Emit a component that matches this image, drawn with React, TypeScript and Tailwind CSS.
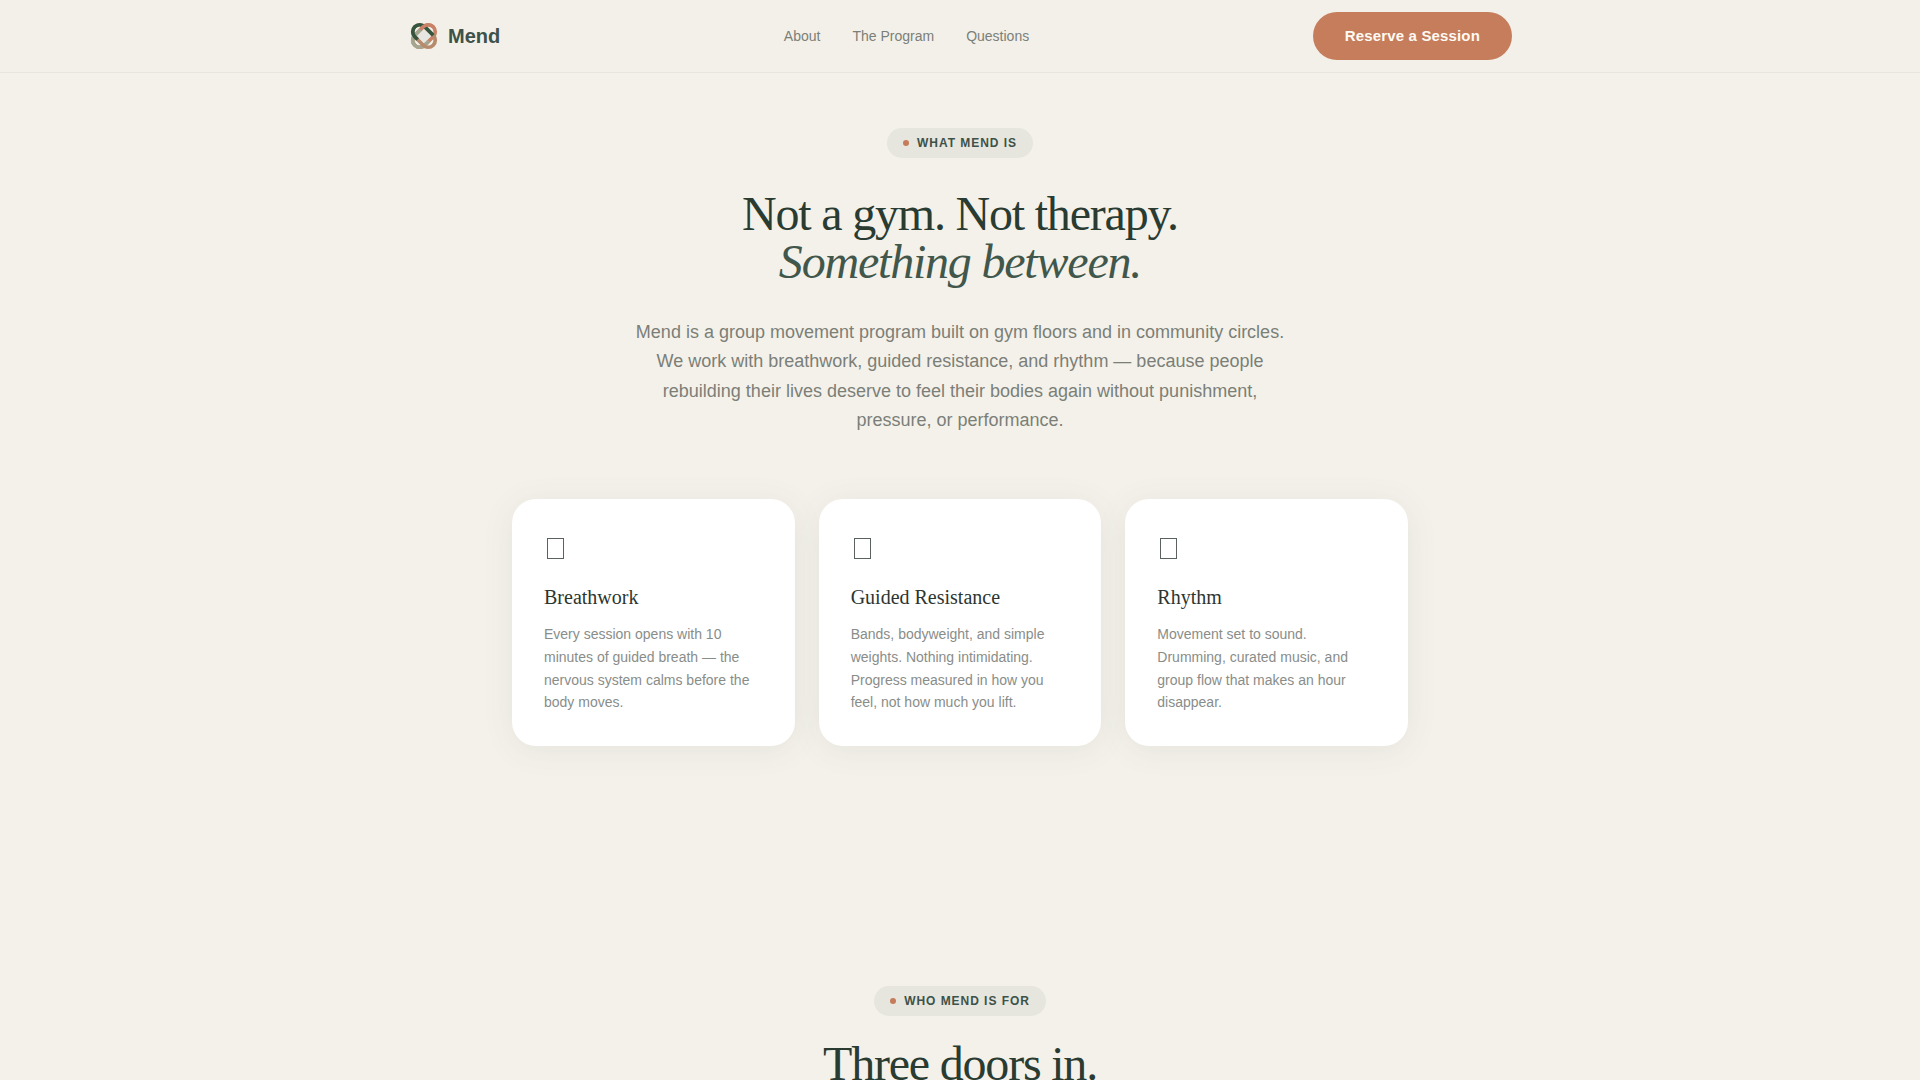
const navLinks = [
  { label: 'About', href: '#about' },
  { label: 'The Program', href: '#program' },
  { label: 'Questions', href: '#questions' },
];

const pillars = [
  {
    title: 'Breathwork',
    text: 'Every session opens with 10 minutes of guided breath — the nervous system calms before the body moves.',
  },
  {
    title: 'Guided Resistance',
    text: 'Bands, bodyweight, and simple weights. Nothing intimidating. Progress measured in how you feel, not how much you lift.',
  },
  {
    title: 'Rhythm',
    text: 'Movement set to sound. Drumming, curated music, and group flow that makes an hour disappear.',
  },
];

function Logo() {
  return (
    <svg className="size-8" viewBox="0 0 32 32" fill="none" strokeWidth="3.7" aria-hidden="true">
      <rect x="11" y="11" width="10" height="10" fill="#e6e7e3" transform="rotate(45 16 16)" />
      <g transform="rotate(-45 16 16)">
        <rect x="3" y="9" width="26" height="14" rx="7" stroke="#c98266" />
        <path d="M18 9 H10 A7 7 0 0 0 10 23 H16" stroke="#a3a691" />
      </g>
      <g transform="rotate(45 16 16)">
        <rect x="3" y="9" width="26" height="14" rx="7" stroke="#b88a6c" />
        <path d="M22 9 H10 A7 7 0 0 0 10 23 H14" stroke="#34553f" />
      </g>
      <path d="M18 9 H22 A7 7 0 0 1 29 16" stroke="#c98266" transform="rotate(-45 16 16)" />
    </svg>
  );
}

function Pill({ children }: { children: string }) {
  return (
    <span className="inline-flex h-[30px] items-center gap-2 rounded-full bg-[#e6e5de] px-4 text-xs font-semibold uppercase tracking-[0.08em] text-[#3d5248]">
      <span className="size-1.5 rounded-full bg-[#c67b5a]" />
      {children}
    </span>
  );
}

export default function App() {
  return (
    <div className="min-h-screen bg-[#f4f1ea] font-['Liberation_Sans',Arial,sans-serif] text-[#2d3531]">
      <header className="border-b border-[#e7e5de] bg-[#f3f0e9]">
        <div className="mx-auto flex max-w-6xl items-center justify-between px-6 py-3">
          <a href="#top" className="flex items-center gap-2 text-xl font-bold text-[#3d5248]">
            <Logo />
            Mend
          </a>
          <nav aria-label="Main" className="flex gap-8 text-sm text-[#7b7f78]">
            {navLinks.map((link) => (
              <a key={link.href} href={link.href}>
                {link.label}
              </a>
            ))}
          </nav>
          <button
            type="button"
            className="h-12 rounded-full bg-[#c67d5c] px-8 text-[15px] font-semibold tracking-[0.01em] text-[#fdf9f3]"
          >
            Reserve a Session
          </button>
        </div>
      </header>
      <main>
        <section id="about" className="px-6 pt-[55px] pb-28">
          <div className="mx-auto flex max-w-4xl flex-col items-center text-center">
            <Pill>What Mend is</Pill>
            <h1 className="mt-8 font-['Liberation_Serif',serif] text-5xl leading-none tracking-tight text-[#2a3b32]">
              Not a gym. Not therapy.
              <br />
              <em className="text-[#42574b]">Something between.</em>
            </h1>
            <p className="mt-8 max-w-2xl text-lg leading-relaxed text-[#7b7f78]">
              Mend is a group movement program built on gym floors and in community circles. We work with
              breathwork, guided resistance, and rhythm — because people rebuilding their lives deserve to feel
              their bodies again without punishment, pressure, or performance.
            </p>
          </div>
          <div className="mx-auto mt-16 grid max-w-4xl grid-cols-3 gap-6">
            {pillars.map((pillar) => (
              <article
                key={pillar.title}
                className="rounded-3xl bg-white p-8 shadow-[0_4px_32px_rgba(45,90,80,0.08)]"
              >
                <div className="mb-4 flex h-9 items-start pt-[7px] pl-[3px]" aria-hidden="true">
                  <span className="h-[21px] w-[17px] border border-[#59625e]" />
                </div>
                <h2 className="mb-3 font-['Liberation_Serif',serif] text-xl leading-7">{pillar.title}</h2>
                <p className="text-sm leading-relaxed text-[#898d89]">{pillar.text}</p>
              </article>
            ))}
          </div>
        </section>
        <section id="program" className="flex flex-col items-center px-6 pt-32 pb-28 text-center">
          <Pill>Who Mend is for</Pill>
          <h2 className="mt-6 font-['Liberation_Serif',serif] text-5xl leading-none tracking-tight text-[#2a3b32]">
            Three doors in.
          </h2>
        </section>
      </main>
    </div>
  );
}
